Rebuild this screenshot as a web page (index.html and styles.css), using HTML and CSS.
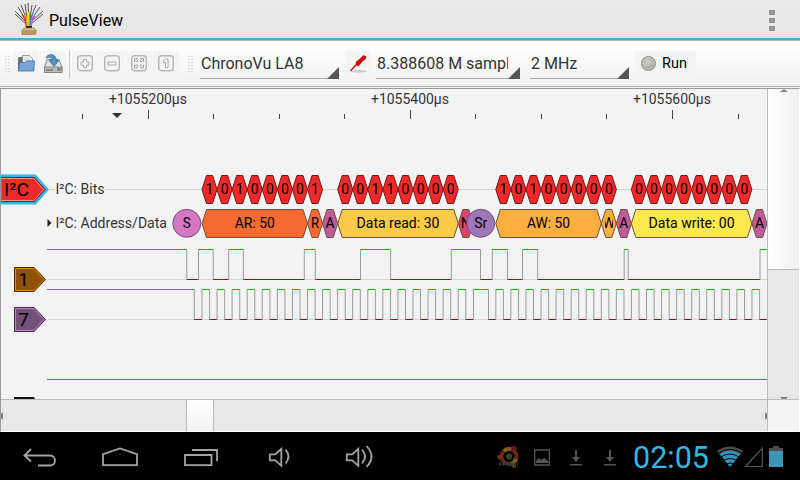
FILE: index.html
```html
<!DOCTYPE html>
<html lang="en">
<head>
<meta charset="utf-8">
<title>PulseView</title>
<link rel="stylesheet" href="styles.css">
</head>
<body>
<header class="titlebar">
  <svg class="logo" width="30" height="32" viewBox="14 3 30 32">
    <g fill="none" stroke-width="1">
      <path stroke="#555" d="M26 22L15 11M26 20L18 7M27 20L21 5M27 18L25 4M29 18L28 3M30 18L32 5M30 20L36 5M31 20L40 7M31 22L43 11M26 24L15 14M31 24L43 14"/>
      <path stroke="#e33" stroke-width="1.500" d="M26.500 27Q26 19 22 15"/>
      <path stroke="#ff8a00" stroke-width="1.500" d="M27.500 27Q27 18 25 13"/>
      <path stroke="#ffe600" stroke-width="1.500" d="M28.300 27V12"/>
      <path stroke="#35b84b" d="M29 27Q29 18 30 12"/>
      <path stroke="#3975ff" d="M30 27Q30 19 33 13"/>
      <path stroke="#d04cff" stroke-width="1.500" d="M31 27Q31 20 35 16"/>
    </g>
    <path fill="#2b2018" d="M26 26h6v3h-6z"/>
    <path fill="#b39c62" stroke="#8b7847" stroke-width=".6" d="M22 30l2-2h10l2 2v4l-2 1H22z"/>
    <path fill="#d8c890" d="M22.500 30l2-1.500h9l2 1.500z"/>
  </svg>
  <h1 class="app-name">PulseView</h1>
  <div class="overflow"><i></i><i></i><i></i></div>
</header>

<div class="toolbar">
  <svg class="grip" width="5" height="18"><path d="M1 1v17M4 1v17"/></svg>
  <div class="tool tool-open">
    <svg width="18" height="18" viewBox="17 54 18 18">
      <path fill="#6b6f74" d="M18 57l1-1h4l1 2v12h-6z"/>
      <path fill="#f3f3f3" stroke="#777" stroke-width=".7" d="M22.500 54.500h7l3 3V66h-10z"/>
      <path stroke="#bbb" stroke-width=".6" d="M24 57h5M24 59h7"/>
      <path fill="#77a5d9" stroke="#3e6ca6" stroke-width=".8" d="M19.500 61.500h6l1-1.500h8l-.7 10H18.500z"/>
    </svg>
  </div>
  <div class="tool tool-save">
    <svg width="19" height="19" viewBox="44 53 19 19">
      <path fill="#e2e2e0" stroke="#777" stroke-width=".8" d="M47 58.500h12l3 7.500v5.500H44.500V66z"/>
      <path fill="#bdbdbb" stroke="#777" stroke-width=".8" d="M44.500 66H62v5.500H44.500z"/>
      <path stroke="#555" stroke-width="1" d="M46 69h7M58 67v3M60 67v3"/>
      <path fill="#4e92c2" stroke="#27618d" stroke-width=".6" d="M46 57q1-3.500 5-3.500 5 0 5.500 6h2.500l-5 6-5-6h3q0-4-6-2.500z"/>
    </svg>
  </div>
  <div class="separator"></div>
  <div class="zoom-tools">
    <div class="tool"><svg class="key" width="16" height="17"><rect x=".7" y=".7" width="14.600" height="15" rx="3"/><path d="M6.500 4.500h3v2.500h2.500v3H9.500v2.500h-3V10H4V7h2.500z"/></svg></div>
    <div class="tool"><svg class="key" width="16" height="17"><rect x=".7" y=".7" width="14.600" height="15" rx="3"/><path d="M4 7h8v3H4z"/></svg></div>
    <div class="tool"><svg class="key" width="16" height="17"><rect x=".7" y=".7" width="14.600" height="15" rx="3"/><path d="M3.500 6.500v-3h3l-1 1 1.500 1.500-1 1-1.500-1.500zM12.500 6.500v-3h-3l1 1L9 6l1 1 1.500-1.500zM3.500 10v3h3l-1-1L7 10.500l-1-1L4.500 11zM12.500 10v3h-3l1-1L9 10.500l1-1 1.500 1.500z"/></svg></div>
    <div class="tool"><svg class="key" width="16" height="17"><rect x=".7" y=".7" width="14.600" height="15" rx="3"/><path d="M7.500 4h2.500v8.500H7.500V7.500h-2V6z"/></svg></div>
  </div>
  <svg class="grip" width="5" height="18"><path d="M1 1v17M4 1v17"/></svg>
  <div class="spinner spinner-device"><span>ChronoVu LA8</span></div>
  <div class="tool tool-probe">
    <svg width="20" height="20" viewBox="348 53 20 20">
      <ellipse cx="359" cy="70.300" rx="8" ry="1.200" fill="#ccc"/>
      <path stroke="#c00" stroke-width="1.300" d="M350.500 70l8-9"/>
      <path fill="#d40000" stroke="#a00" stroke-width=".5" d="M356 61l5-4 2-2.500 3 1-.5 2.500-3 2-4 5-2-.5z"/>
    </svg>
  </div>
  <div class="spinner spinner-samples"><span>8.388608 M sampl</span></div>
  <div class="spinner spinner-rate"><span>2 MHz</span></div>
  <button class="run"><i class="led"></i>Run</button>
</div>

<main class="view">
  <svg class="traces" id="traces" width="766" height="310" viewBox="1 89 766 310"></svg>
  <div class="vscroll">
    <svg class="arrow-up" width="8" height="3"><path d="M4 0L8 3H0z"/></svg>
    <div class="vthumb"></div>
    <svg class="arrow-down" width="8" height="2"><path d="M0 0h8L6 2H2z"/></svg>
  </div>
  <div class="hscroll">
    <svg width="2" height="8"><path d="M0 2L2 0v8L0 6z"/></svg>
    <div class="hthumb"></div>
    <svg class="arrow-right" width="2" height="8"><path d="M0 0L2 2v4L0 8z"/></svg>
  </div>
  <div class="corner"></div>
</main>

<footer class="navbar">
  <svg class="nav" width="400" height="48" viewBox="0 432 400 48">
    <path d="M31 449l-6.500 6.500 6.500 6M25 455.500h25a5 5 0 0 1 0 10H38"/>
    <path d="M103 465.200v-11l17-5.700 17 5.700v11z"/>
    <path d="M185 455h26.500v10.200H185zM192 450h25v11"/>
    <path d="M269.800 454.300h5.500l6-5.500v17l-6-5.500h-5.500zM285.500 449.500q6 7 0 14"/>
    <path d="M346.800 454.300h5.500l6-5.500v17l-6-5.500h-5.500zM362 449.500q6 7 0 14M366.500 446q10 10.500 0 21"/>
  </svg>
  <div class="status">
    <svg width="22" height="24" viewBox="497 445 22 24">
      <circle cx="509" cy="456.500" r="7.500" fill="none" stroke="#6b2a14" stroke-width="4"/>
      <path d="M504 451a7.500 7.500 0 0 1 7-2M516 459a7.500 7.500 0 0 1-5 5" fill="none" stroke="#80601c" stroke-width="4"/>
      <circle cx="514" cy="448.500" r="2.500" fill="#701717"/><circle cx="499.500" cy="457" r="2.200" fill="#803015"/><circle cx="514" cy="466" r="2" fill="#6c3714"/>
      <circle cx="509" cy="456.500" r="3" fill="#364818"/>
      <path stroke="#1d3d4b" stroke-width="3" stroke-dasharray="2 1" d="M499 464h19"/>
    </svg>
    <svg width="16" height="17"><path fill="none" stroke="#555" stroke-width="1.300" d="M.7 1h14.600v15H.7z"/><path fill="#555" d="M2 14v-2l3-3 2 2 3-2 4 3v2z"/></svg>
    <svg width="12" height="17"><path fill="#555" d="M5 1h2v7h3l-4 5-4-5h3zM0 15h12v1.500H0z"/></svg>
    <svg width="12" height="17"><path fill="#555" d="M5 1h2v7h3l-4 5-4-5h3zM0 15h12v1.500H0z"/></svg>
    <time class="clock">02:05</time>
    <svg class="signals" width="66" height="22" viewBox="717 445 66 22">
      <path fill="#4d4d4d" d="M717 450q13-9 26 0l-3 4q-10-7-20 0z"/>
      <path fill="#3095bd" d="M719.500 453q10.500-7 21 0L730 466z"/>
      <path fill="none" stroke="#000" stroke-width="1" d="M718 452.500q12-8.500 24 0M720 456.500q10-7 20 0M722 460.300q8-5.500 16 0M725 463.500q5-3 10 0"/>
      <path fill="none" stroke="#555" stroke-width="1.200" d="M745.500 465.500L762.300 447v18.500z"/>
      <path fill="#4d4d4d" d="M773 445h6v2h4v3h-14v-3h4z"/><path fill="#3d96b8" d="M769 450h14v16h-14z"/>
    </svg>
  </div>
</footer>
<script src="script.js"></script>
</body>
</html>
```
FILE: styles.css
```css
* { box-sizing: border-box; }
body {
  margin: 0;
  width: 800px;
  height: 480px;
  display: flex;
  flex-direction: column;
  overflow: hidden;
  background: #f3f3f3;
  font-family: Roboto, sans-serif;
  color: #333;
}
svg { display: block; flex: none; }

.titlebar {
  height: 40px;
  flex: none;
  display: flex;
  align-items: center;
  padding: 0 25px 0 14px;
  background: linear-gradient(#e9e9e9, #e5e5e5);
  border-bottom: 2px solid #33b5e5;
}
.app-name { margin: 3px 0 0 5px; font-size: 16px; font-weight: 400; line-height: 20px; color: #000; }
.overflow { margin: 2px 0 0 auto; display: grid; gap: 3px; }
.overflow i { width: 6px; height: 5px; background: #969696; }

.toolbar {
  height: 47px;
  flex: none;
  display: flex;
  align-items: flex-start;
  padding: 3px 0 0 5px;
  border-top: 1px solid #bbb;
  border-bottom: 1px solid #b5b5b5;
  background: linear-gradient(#fff, #f1f1f1);
}
.grip { margin-top: 11px; fill: none; stroke: #b8b8b8; stroke-width: 1px; stroke-dasharray: 1px 2px; }
.tool { width: 26px; height: 25px; margin-top: 7px; display: flex; align-items: center; justify-content: center; background: #f4f4f4; }
.tool-open { margin-left: 3px; }
.tool-save { margin-left: 1px; }
.separator { width: 1px; height: 28px; margin: 6px 7px 0 3px; background: #c4c4c4; }
.zoom-tools { display: flex; gap: 1px; margin-left: -5px; margin-right: 9px; }
.key rect { fill: #f4f4f4; stroke: #b5b5b5; stroke-width: 1.4px; }
.key path { fill: #fff; stroke: #a2a2a2; stroke-width: 1px; }

.spinner { height: 35px; position: relative; border-bottom: 1px solid #aaa; font-size: 16px; line-height: 20px; padding-top: 10px; white-space: nowrap; }
.spinner span { display: block; overflow: hidden; padding-left: 1px; }
.spinner::after {
  content: "";
  position: absolute;
  right: 0;
  bottom: -1px;
  border-left: 12px solid transparent;
  border-bottom: 12px solid #555;
}
.spinner-device { width: 139px; margin-left: 7px; }
.tool-probe { margin-left: 6px; }
.spinner-samples { width: 144px; margin-left: 5px; }
.spinner-samples span { width: 132px; }
.spinner-rate { width: 99px; margin-left: 10px; }
.run {
  width: 61px;
  height: 25px;
  margin: 7px 0 0 6px;
  padding: 0 0 0 6px;
  display: flex;
  align-items: center;
  gap: 6px;
  border: 0;
  background: #f4f4f4;
  font: 14.5px Roboto, sans-serif;
  color: #000;
}
.led {
  width: 15px;
  height: 15px;
  border: 1px solid #888;
  border-radius: 50%;
  background: radial-gradient(circle at 40% 35%, #cfd1ca, #94978f);
  box-shadow: inset 0 0 0 1px #c6c6c4;
}

.view {
  height: 344px;
  flex: none;
  display: grid;
  grid-template: 310px 32px / 766px 32px;
  margin-top: 1px;
  border: 1px solid #999;
  border-right-color: #fff;
  border-bottom-color: #fff;
}
.traces text { font-family: Roboto, sans-serif; }
.tick { stroke: #444; stroke-width: 1px; }
.baseline { stroke: #d3d3d3; stroke-width: 1px; }
.high { stroke: #0b0; }
.low { stroke: #b80000; }
.edge { stroke: #999; }

.vscroll { display: flex; flex-direction: column; align-items: center; background: #e8e8e8; border-left: 1px solid #bbb; }
.vthumb { width: 100%; height: 181px; margin-top: -3px; background: linear-gradient(90deg, #fff, #f1f1f1); border-bottom: 1px solid #bbb; }
.arrow-up { z-index: 1; }
.arrow-down { margin-top: auto; }
.vscroll svg, .hscroll svg { fill: #808080; }
.hscroll { display: flex; align-items: center; background: #e8e8e8; border-top: 1px solid #bbb; }
.hthumb { width: 28px; height: 31px; margin-left: 183px; background: linear-gradient(#fff, #f1f1f1); border: solid #bbb; border-width: 0 1px; }
.arrow-right { margin-left: auto; }
.corner { background: #f3f3f3; border: solid #bbb; border-width: 1px 0 0 1px; }

.navbar { height: 48px; flex: none; display: flex; background: #000; }
.nav { fill: none; stroke: #a3a3a3; stroke-width: 1.8px; }
.status { flex: 1; display: flex; align-items: center; padding: 2px 0 0 97px; }
.status svg + svg { margin-left: 15px; }
.status svg:nth-child(4) { margin-left: 22px; }
.status svg:nth-child(3) { margin-left: 20px; }
.clock { width: 76px; margin-left: 17px; padding-top: 1px; font-size: 30.5px; line-height: 36px; color: #33b5e5; }
.status .signals { margin-left: 8px; margin-top: -1px; }
```
FILE: script.js
```js
const out = [];

function text(x, y, str, size, width, color = "#333", anchor = "middle", extra = "") {
  const fit = width ? ` textLength="${width}" lengthAdjust="spacingAndGlyphs"` : "";
  out.push(`<text x="${x}" y="${y}" font-size="${size}" fill="${color}" text-anchor="${anchor}"${fit}${extra}>${str}</text>`);
}

function hexagon(x1, x2, top, fill, stroke) {
  const mid = top + 14, bottom = top + 28, inset = 4.5;
  out.push(`<path fill="${fill}" stroke="${stroke}" d="M${x1} ${mid}L${x1 + inset} ${top}H${x2 - inset}L${x2} ${mid}L${x2 - inset} ${bottom}H${x1 + inset}z"/>`);
}

function line(cls, x1, y1, x2, y2) {
  out.push(`<line class="${cls}" x1="${x1}" y1="${y1}" x2="${x2}" y2="${y2}"/>`);
}

// Ruler
[[148, "+1055200µs"], [410, "+1055400µs"], [672, "+1055600µs"]].forEach(([x, label]) => {
  text(x, 104, label, 14, 78);
  line("tick", x + 0.5, 110, x + 0.5, 119);
});
[82.5, 213.5, 279.5, 344.5, 475.5, 541.5, 606.5, 738.5].forEach(x => line("tick", x, 114, x, 119));
out.push('<path fill="#333" d="M112 113h10l-5 5z"/>');

// Protocol decoder rows
line("baseline", 49, 189.5, 767, 189.5);
out.push('<path fill="#f3f3f3" d="M55 180h50v18H55z"/>');
text(55.5, 194, "I²C: Bits", 14, 49, "#333", "start");
text(55.5, 228, "I²C: Address/Data", 14, 111.5, "#333", "start");
out.push('<path fill="#222" d="M47.500 219v8l4-4z"/>');

const pitch = 15.07;
[[202, "10100001"], [337.700, "00110000"], [495.8, "10100000"], [631.3, "00000000"]].forEach(([start, bits]) => {
  [...bits].forEach((bit, i) => {
    const x = start + i * pitch;
    hexagon(x, x + pitch, 175.5, "#ef2929", "#7c1515");
    text(x + pitch / 2, 194.4, bit, 14, 0, "#000");
  });
});

out.push('<clipPath id="narrow"><path d="M605 210h8v28h-8z"/></clipPath>');
[
  [202, 307.5, "#f76b31", "AR: 50", 40], [307.5, 322.5, "#f76b31", "R", 8],
  [322.5, 337.700, "#c05c99", "A", 9], [337.700, 458.3, "#fbca47", "Data read: 30", 83],
  [458.3, 473.3, "#d9446f", "N", 10], [495.8, 601.3, "#fcae3e", "AW: 50", 43],
  [601.3, 616.3, "#fcae3e", "W", 12.5], [616.3, 631.3, "#c05c99", "A", 9],
  [631.3, 751.9, "#fbe94e", "Data write: 00", 86], [751.9, 767, "#c05c99", "A", 9]
].forEach(([a, b, fill, label, width]) => {
  hexagon(a, b, 209.5, fill, "#705038");
  text((a + b) / 2, 228, label, 14, width, "#000", "middle", label === "W" ? ' clip-path="url(#narrow)"' : "");
});
[[186.8, "#d576c5", "S", 8], [480.7, "#9d77ba", "Sr", 13]].forEach(([x, fill, label, width]) => {
  out.push(`<circle cx="${x}" cy="223.300" r="14" fill="${fill}" stroke="#705570"/>`);
  text(x, 228, label, 14, width, "#000");
});

// Logic traces: each list holds the transitions, starting from a high level
function trace(highY, lowY, transitions) {
  line("baseline", 47, lowY, 767, lowY);
  let x = 47, high = true;
  for (const next of [...transitions, 767]) {
    const y = high ? highY : lowY;
    if (x > 47) line("edge", x, highY, x, lowY);
    line(high ? "high" : "low", x, y, next, y);
    x = next;
    high = !high;
  }
}
trace(249.5, 279.5, [186.8, 198.5, 213.2, 228.7, 243.4, 304.3, 315.3, 360.5, 390.6, 451.3, 480.5, 492.3, 507.5, 522.5, 537.700, 624.2, 628.2, 760]);

const clock = [194.3];
for (let k = 0; k < 18; k++) clock.push(202 + k * pitch, 209.6 + k * pitch);
clock.push(473.5, 488.5);
for (let k = 0; k < 18; k++) clock.push(495.8 + k * pitch, 503.4 + k * pitch);
trace(289.5, 319.5, clock);
line("high", 47, 379.5, 767, 379.5);

// Row tags
out.push('<path fill="#ef2929" stroke="#33b5e5" stroke-width="3" d="M0 176h35l12 13.500-12 13.500H0z"/>');
out.push('<path fill="none" stroke="#8a1515" d="M0 177.500h34.300l10.700 12-10.700 12H0z"/><path fill="none" stroke="#ff9292" d="M0 178.500h33.800l9.700 11-9.700 11H0"/>');
text(4, 195.5, "I²C", 18, 25, "#000", "start");
[[279.5, "#8f5202", "#e58500", "#4c2b00", "1"], [319.5, "#75507b", "#bd86c5", "#3d2941", "7"]].forEach(([y, fill, inner, outer, label]) => {
  out.push(`<path fill="${fill}" stroke="${outer}" d="M14.500 ${y - 12}H34l11.500 12L34 ${y + 12}H14.500z"/>`);
  out.push(`<path fill="none" stroke="${inner}" d="M15.500 ${y - 11}H33.500l10.500 11L33.500 ${y + 11}H15.500z"/>`);
  text(23.5, y + 6.5, label, 19, 0, "#000");
});
out.push('<path fill="#111" d="M14 397h20l1 2H14z"/>');

document.getElementById("traces").innerHTML = out.join("");
```
